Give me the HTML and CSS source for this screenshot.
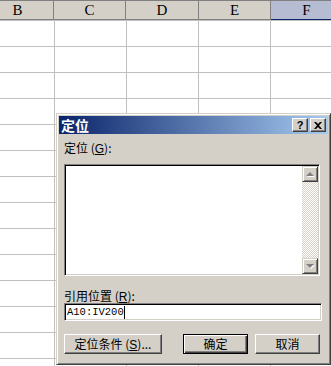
FILE: index.html
```html
<!DOCTYPE html>
<html lang="zh-CN">
<head>
    <meta charset="UTF-8">
    <title>定位</title>
    <link rel="stylesheet" href="styles.css">
</head>
<body>
    <div class="sheet">
        <div class="col-header">
            <div class="hcell">B</div>
            <div class="hcell">C</div>
            <div class="hcell">D</div>
            <div class="hcell">E</div>
            <div class="hcell selected">F</div>
        </div>
        <div class="grid"></div>
    </div>

    <!-- 定位对话框 -->
    <div class="dialog">
        <div class="titlebar">
            <span class="title">定位</span>
            <div class="title-buttons">
                <span class="tbtn">?</span>
                <span class="tbtn close">
                    <svg width="8" height="7" viewBox="0 0 8 7"><path d="M0 0h2l2 2 2-2h2l-3 3.5 3 3.5h-2l-2-2-2 2h-2l3-3.5z" fill="#000"/></svg>
                </span>
            </div>
        </div>
        <div class="dialog-body">
            <div class="label">定位 (<u>G</u>):</div>
            <div class="listbox">
                <div class="list-area"></div>
                <div class="scrollbar">
                    <div class="sbtn"><span class="arrow up"></span></div>
                    <div class="track"></div>
                    <div class="sbtn"><span class="arrow down"></span></div>
                </div>
            </div>
            <div class="label ref-label">引用位置 (<u>R</u>):</div>
            <div class="textbox"><span class="value">A10:IV200</span><span class="caret"></span></div>
            <div class="button-row">
                <button class="btn wide">定位条件 (<u>S</u>)...</button>
                <button class="btn default">确定</button>
                <button class="btn">取消</button>
            </div>
        </div>
    </div>
</body>
</html>
```

FILE: styles.css
```css
body {
    margin: 0;
    width: 331px;
    height: 366px;
    overflow: hidden;
    background: #fff;
    font-family: "Noto Sans CJK SC", "Liberation Sans", sans-serif;
    font-size: 12px;
    color: #000;
}

.sheet {
    width: 331px;
    height: 366px;
    overflow: hidden;
}

.col-header {
    display: flex;
    height: 19px;
    margin-left: -18px;
    border-top: 1px solid #808080;
    background: #d4d0c8;
}

.hcell {
    flex: 0 0 72px;
    box-sizing: border-box;
    height: 19px;
    border-right: 1px solid #808080;
    border-bottom: 1px solid #808080;
    text-align: center;
    font-family: "Liberation Serif", serif;
    font-size: 15px;
    line-height: 18px;
}

.hcell:nth-child(3) {
    flex-basis: 73px;
}

.hcell.selected {
    background: #b6bdd2;
    border-bottom: 1px solid #0a246a;
}

.grid {
    height: 346px;
    background-image:
        linear-gradient(to bottom, transparent 25px, #c0c0c0 25px),
        linear-gradient(to right, transparent 71px, #c0c0c0 71px);
    background-size: 100% 26px, 72px 100%;
    background-position: 0 1px, 55px 0;
}

.dialog {
    position: absolute;
    left: 56px;
    top: 113px;
    width: 275px;
    height: 252px;
    box-sizing: border-box;
    background: #d4d0c8;
    border-top: 1px solid #d4d0c8;
    border-left: 1px solid #d4d0c8;
    border-right: 1px solid #404040;
    border-bottom: 1px solid #404040;
    box-shadow: inset 1px 1px 0 #fff, inset -1px -1px 0 #808080;
    padding: 2px;
}

.titlebar {
    display: flex;
    align-items: center;
    justify-content: space-between;
    height: 18px;
    padding: 0 2px 0 2px;
    background: linear-gradient(to right, #0a246a, #a6caf0);
}

.title {
    color: #fff;
    font-weight: bold;
    font-size: 14px;
    line-height: 18px;
}

.title-buttons {
    display: flex;
    gap: 2px;
}

.tbtn {
    display: flex;
    align-items: center;
    justify-content: center;
    width: 16px;
    height: 14px;
    box-sizing: border-box;
    background: #d4d0c8;
    border-top: 1px solid #fff;
    border-left: 1px solid #fff;
    border-right: 1px solid #404040;
    border-bottom: 1px solid #404040;
    box-shadow: inset -1px -1px 0 #808080;
    font-family: "Liberation Sans", sans-serif;
    font-weight: bold;
    font-size: 11px;
    line-height: 12px;
}

.dialog-body {
    padding: 7px 5px 0 5px;
}

.label {
    height: 14px;
    line-height: 14px;
    font-size: 12px;
}

.label u {
    font-family: "Liberation Sans", sans-serif;
}

.listbox {
    display: flex;
    margin-top: 9px;
    width: 256px;
    height: 112px;
    box-sizing: border-box;
    background: #fff;
    border-top: 1px solid #808080;
    border-left: 1px solid #808080;
    border-right: 1px solid #fff;
    border-bottom: 1px solid #fff;
    box-shadow: inset 1px 1px 0 #000, inset -1px -1px 0 #d4d0c8;
    padding: 1px;
}

.list-area {
    flex: 1;
}

.scrollbar {
    display: flex;
    flex-direction: column;
    width: 16px;
}

.track {
    flex: 1;
    background: repeating-conic-gradient(#d4d0c8 0 25%, #fff 0 50%) 0 0 / 2px 2px;
}

.sbtn {
    display: flex;
    align-items: center;
    justify-content: center;
    width: 16px;
    height: 16px;
    box-sizing: border-box;
    background: #d4d0c8;
    border-top: 1px solid #d4d0c8;
    border-left: 1px solid #d4d0c8;
    border-right: 1px solid #404040;
    border-bottom: 1px solid #404040;
    box-shadow: inset 1px 1px 0 #fff, inset -1px -1px 0 #808080;
}

.arrow {
    width: 0;
    height: 0;
    border-left: 4px solid transparent;
    border-right: 4px solid transparent;
}

.arrow.up {
    border-bottom: 4px solid #808080;
    filter: drop-shadow(1px 1px 0 #fff);
}

.arrow.down {
    border-top: 4px solid #808080;
    filter: drop-shadow(1px 1px 0 #fff);
}

.ref-label {
    margin-top: 13px;
}

.textbox {
    display: flex;
    align-items: center;
    margin-top: 0;
    width: 258px;
    height: 18px;
    box-sizing: border-box;
    background: #fff;
    border-top: 1px solid #808080;
    border-left: 1px solid #808080;
    border-right: 1px solid #fff;
    border-bottom: 1px solid #fff;
    box-shadow: inset 1px 1px 0 #000, inset -1px -1px 0 #d4d0c8;
    padding-left: 2px;
}

.value {
    font-family: "Liberation Mono", monospace;
    font-size: 10.5px;
    line-height: 14px;
}

.caret {
    width: 1px;
    height: 13px;
    background: #000;
}

.button-row {
    display: flex;
    margin-top: 13px;
}

.btn {
    height: 20px;
    width: 65px;
    padding: 0;
    margin: 0 0 0 7px;
    box-sizing: border-box;
    background: #d4d0c8;
    border-top: 1px solid #fff;
    border-left: 1px solid #fff;
    border-right: 1px solid #404040;
    border-bottom: 1px solid #404040;
    box-shadow: inset -1px -1px 0 #808080;
    font-family: "Noto Sans CJK SC", sans-serif;
    font-size: 12px;
    line-height: 16px;
    color: #000;
}

.btn.wide {
    width: 98px;
    margin-left: 0;
    margin-right: 14px;
}

.btn.wide u {
    font-family: "Liberation Sans", sans-serif;
}

.btn.default {
    border: 1px solid #000;
    box-shadow: inset 1px 1px 0 #fff, inset -1px -1px 0 #404040, inset -2px -2px 0 #808080;
}
```
